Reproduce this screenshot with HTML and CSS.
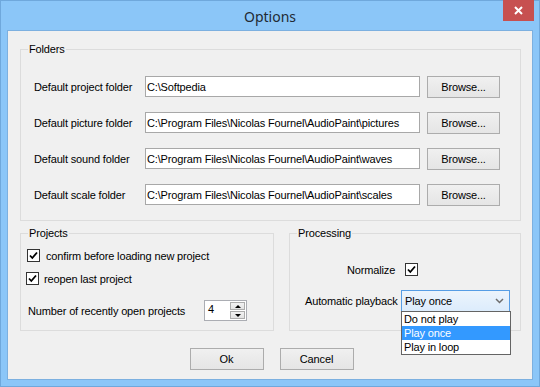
FILE: index.html
```html
<!DOCTYPE html>
<html>
<head>
<meta charset="utf-8">
<link rel="stylesheet" href="styles.css">
</head>
<body>
<div class="window">
  <div class="titlebar">
    <span class="title">Options</span>
    <div class="close"><svg width="9" height="9" viewBox="0 0 9 9"><path d="M1 1 L8 8 M8 1 L1 8" stroke="#fff" stroke-width="2"/></svg></div>
  </div>
  <div class="client">
    <div class="group folders">
      <span class="legend">Folders</span>
      <div class="row"><span class="label">Default project folder</span><div class="field">C:\Softpedia</div><button class="btn browse">Browse...</button></div>
      <div class="row"><span class="label">Default picture folder</span><div class="field">C:\Program Files\Nicolas Fournel\AudioPaint\pictures</div><button class="btn browse">Browse...</button></div>
      <div class="row"><span class="label">Default sound folder</span><div class="field">C:\Program Files\Nicolas Fournel\AudioPaint\waves</div><button class="btn browse">Browse...</button></div>
      <div class="row"><span class="label">Default scale folder</span><div class="field">C:\Program Files\Nicolas Fournel\AudioPaint\scales</div><button class="btn browse">Browse...</button></div>
    </div>
    <div class="bottom">
      <div class="group projects">
        <span class="legend">Projects</span>
        <div class="check-row"><span class="cb"><svg width="11" height="11" viewBox="0 0 11 11"><path d="M2 5.5 L4.3 8 L9 2.5" fill="none" stroke="#000" stroke-width="1.8"/></svg></span><span>confirm before loading new project</span></div>
        <div class="check-row second"><span class="cb"><svg width="11" height="11" viewBox="0 0 11 11"><path d="M2 5.5 L4.3 8 L9 2.5" fill="none" stroke="#000" stroke-width="1.8"/></svg></span><span>reopen last project</span></div>
        <div class="spin-row">
          <span class="spin-label">Number of recently open projects</span>
          <div class="spinner">
            <span class="spin-value">4</span>
            <div class="spin-btns"><span class="spin-btn"><i class="tri-up"></i></span><span class="spin-btn"><i class="tri-down"></i></span></div>
          </div>
        </div>
      </div>
      <div class="group processing">
        <span class="legend">Processing</span>
        <div class="norm-row"><span>Normalize</span><span class="cb"><svg width="11" height="11" viewBox="0 0 11 11"><path d="M2 5.5 L4.3 8 L9 2.5" fill="none" stroke="#000" stroke-width="1.8"/></svg></span></div>
        <div class="play-row">
          <span class="play-label">Automatic playback</span>
          <div class="select">
            <span>Play once</span>
            <svg class="chev" width="9" height="6" viewBox="0 0 9 6"><path d="M1 1 L4.5 4.5 L8 1" fill="none" stroke="#6d6d6d" stroke-width="1.5"/></svg>
            <div class="list">
              <div class="item">Do not play</div>
              <div class="item sel">Play once</div>
              <div class="item">Play in loop</div>
            </div>
          </div>
        </div>
      </div>
    </div>
    <div class="actions">
      <button class="btn action">Ok</button>
      <button class="btn action">Cancel</button>
    </div>
  </div>
</div>
</body>
</html>
```
FILE: styles.css
```css
body {
  margin: 0;
}
.window {
  width: 540px;
  height: 387px;
  box-sizing: border-box;
  border: 1px solid #6fa8dc;
  background: #8bc6f8;
  display: flex;
  flex-direction: column;
  font: 11px "Liberation Sans", Arial, sans-serif;
  letter-spacing: -0.15px;
  color: #000;
}
.titlebar {
  height: 29px;
  display: grid;
  grid-template-columns: 1fr auto 1fr;
  align-items: center;
}
.title {
  grid-column: 2;
  font: 14px "Noto Sans", sans-serif;
  letter-spacing: 0;
  color: #222a33;
  padding-top: 1px;
}
.close {
  grid-column: 3;
  justify-self: end;
  align-self: start;
  margin-top: -1px;
  margin-right: 5px;
  width: 31px;
  height: 21px;
  background: #c75050;
  display: flex;
  align-items: center;
  justify-content: center;
}
.client {
  margin: 0 6px 6px;
  height: 350px;
  box-sizing: border-box;
  border: 1px solid #7cb0e0;
  background: #f0f0f0;
  padding: 18px 11px 9px 12px;
  display: flex;
  flex-direction: column;
}
.group {
  border: 1px solid #dcdcdc;
  position: relative;
}
.legend {
  position: absolute;
  top: -7px;
  left: 7px;
  padding: 0 1px;
  background: #f0f0f0;
  line-height: 13px;
}
.folders {
  padding: 26px 0 14px 13px;
  display: flex;
  flex-direction: column;
  gap: 14px;
}
.row {
  display: flex;
  align-items: center;
  height: 22px;
}
.label {
  width: 111px;
}
.field {
  align-self: flex-start;
  width: 275px;
  height: 21px;
  box-sizing: border-box;
  border: 1px solid #a8a8a8;
  background: #fff;
  padding-left: 1px;
  display: flex;
  align-items: center;
  white-space: nowrap;
  overflow: hidden;
}
.btn {
  height: 22px;
  box-sizing: border-box;
  border: 1px solid #acacac;
  background: linear-gradient(#f0f0f0, #e5e5e5);
  font: inherit;
  letter-spacing: inherit;
  color: #000;
  padding: 0;
  border-radius: 0;
}
.browse {
  width: 73px;
  margin-left: 7px;
}
.bottom {
  display: flex;
  gap: 15px;
  margin-top: 12px;
  height: 98px;
}
.projects {
  width: 254px;
  box-sizing: border-box;
  padding: 15px 0 0 6px;
  display: flex;
  flex-direction: column;
}
.processing {
  width: 232px;
  box-sizing: border-box;
  padding-top: 29px;
  display: flex;
  flex-direction: column;
}
.cb {
  width: 13px;
  height: 13px;
  box-sizing: border-box;
  border: 1px solid #333;
  background: #fff;
  display: flex;
}
.check-row {
  display: flex;
  align-items: center;
  gap: 6px;
  height: 13px;
}
.check-row.second {
  margin-top: 10px;
  margin-left: -1px;
  gap: 5px;
}
.spin-row {
  display: flex;
  align-items: center;
  height: 21px;
  margin-top: 15px;
  margin-left: 1px;
}
.spin-label {
  width: 176px;
}
.spinner {
  width: 43px;
  height: 21px;
  box-sizing: border-box;
  border: 1px solid #abadb3;
  background: #fff;
  display: flex;
}
.spin-value {
  flex: 1;
  padding: 2px 0 0 3px;
}
.spin-btns {
  width: 15px;
  display: flex;
  flex-direction: column;
  padding: 1px 1px 1px 0;
  gap: 1px;
}
.spin-btn {
  flex: 1;
  border: 1px solid #acacac;
  background: linear-gradient(#f2f2f2, #e3e3e3);
  display: flex;
  align-items: center;
  justify-content: center;
}
.tri-up {
  width: 0;
  height: 0;
  border-left: 3px solid transparent;
  border-right: 3px solid transparent;
  border-bottom: 3px solid #000;
}
.tri-down {
  width: 0;
  height: 0;
  border-left: 3px solid transparent;
  border-right: 3px solid transparent;
  border-top: 3px solid #000;
}
.norm-row {
  display: flex;
  align-items: center;
  gap: 10px;
  height: 13px;
  margin-left: 57px;
}
.play-row {
  display: flex;
  align-items: center;
  height: 22px;
  margin-top: 14px;
  margin-left: 15px;
}
.play-label {
  width: 96px;
  white-space: nowrap;
}
.select {
  position: relative;
  width: 109px;
  height: 22px;
  box-sizing: border-box;
  border: 1px solid #569de5;
  background: linear-gradient(#ecf4fc, #dcecfc);
  padding: 0 5px 0 3px;
  display: flex;
  align-items: center;
  justify-content: space-between;
}
.list {
  position: absolute;
  left: -1px;
  top: 20px;
  width: 110px;
  box-sizing: border-box;
  border: 1px solid #646464;
  background: #fff;
}
.item {
  height: 14px;
  line-height: 14px;
  padding-left: 2px;
}
.item.sel {
  background: #3399ff;
  color: #fff;
}
.actions {
  display: flex;
  justify-content: center;
  gap: 16px;
  margin-top: 17px;
  padding-left: 2px;
}
.action {
  width: 74px;
}
```
